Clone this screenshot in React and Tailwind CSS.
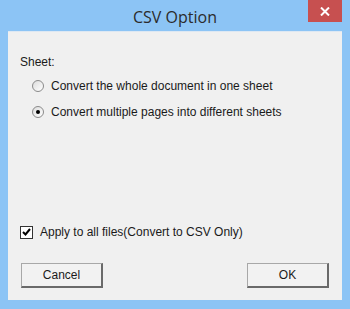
import React, { useState } from "react";

const Radio = ({ checked, onClick }) => (
  <span
    onClick={onClick}
    className="w-[12px] h-[12px] rounded-full border border-[#8a8a8a] bg-gradient-to-br from-[#dcdcdc] to-white flex items-center justify-center shrink-0"
  >
    {checked && <span className="w-[4px] h-[4px] rounded-full bg-black" />}
  </span>
);

const Button = ({ children }) => (
  <button className="w-[82px] h-[25px] bg-[#f2f2f2] border-t border-l border-[#a8a8a8] border-r-2 border-b-2 border-r-[#6a6a6a] border-b-[#6a6a6a] text-[12px] text-[#1a1a1a] flex items-center justify-center">
    {children}
  </button>
);

export default function App() {
  // which radio is picked
  const [mode, setMode] = useState("multi");
  const [applyAll, setApplyAll] = useState(true);

  return (
    <div
      className="w-[350px] h-[309px] bg-[#8cc4f5] flex flex-col"
      style={{ fontFamily: '"Liberation Sans", Arial, sans-serif' }}
    >
      {/* Title bar */}
      <div className="relative h-[31px] flex items-center justify-center shrink-0">
        <span
          className="text-[16px] text-[#2b2b2b] mt-[2px]"
          style={{ fontFamily: '"Open Sans", sans-serif' }}
        >
          CSV Option
        </span>
        <div className="absolute top-0 right-[8px] w-[34px] h-[22px] bg-[#c75050] flex items-center justify-center">
          <svg width="10" height="9" viewBox="0 0 10 9">
            <path d="M1 0.5 L9 8.5 M9 0.5 L1 8.5" stroke="white" strokeWidth="2" />
          </svg>
        </div>
      </div>

      {/* Body */}
      <div className="flex-1 mx-[8px] mb-[9px] bg-[#f0f0f0] border-t border-[#dde8f3] flex flex-col text-[12px] text-[#1a1a1a] pl-[12px] pr-[12px]">
        <div className="mt-[23px] leading-[14px]">Sheet:</div>

        <div className="mt-[10px] flex items-center gap-[7px] pl-[12px] leading-[14px]">
          <Radio checked={mode === "one"} onClick={() => setMode("one")} />
          <span>Convert the whole document in one sheet</span>
        </div>
        <div className="mt-[12px] flex items-center gap-[7px] pl-[12px] leading-[14px]">
          <Radio checked={mode === "multi"} onClick={() => setMode("multi")} />
          <span>Convert multiple pages into different sheets</span>
        </div>

        <div className="mt-[106px] flex items-center gap-[7px] leading-[14px]">
          <span
            onClick={() => setApplyAll(!applyAll)}
            className="w-[13px] h-[13px] border border-[#333] bg-white flex items-center justify-center shrink-0"
          >
            {applyAll && (
              <svg width="9" height="8" viewBox="0 0 9 8">
                <path d="M1 4 L3.5 6.5 L8 1" stroke="black" strokeWidth="2" fill="none" />
              </svg>
            )}
          </span>
          <span>Apply to all files(Convert to CSV Only)</span>
        </div>

        <div className="mt-[24px] flex justify-between pl-[1px] pr-[1px]">
          <Button>Cancel</Button>
          <Button>OK</Button>
        </div>
      </div>
    </div>
  );
}
